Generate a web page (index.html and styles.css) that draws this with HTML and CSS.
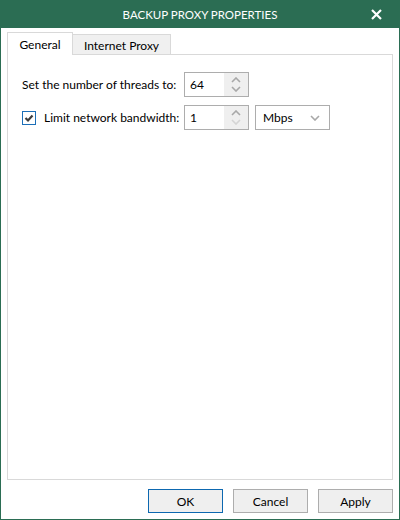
FILE: index.html
```html
<!DOCTYPE html>
<html>
<head>
<meta charset="utf-8">
<link rel="stylesheet" href="styles.css">
</head>
<body>
<div class="window">
  <div class="titlebar">
    <span></span>
    <span class="title">BACKUP PROXY PROPERTIES</span>
    <span class="close">
      <svg width="11" height="11" viewBox="0 0 11 11"><path d="M1 1 L10 10 M10 1 L1 10" stroke="#fff" stroke-width="2.2" fill="none"/></svg>
    </span>
  </div>
  <div class="body">
    <div class="tabs">
      <div class="tab active">General</div>
      <div class="tab inactive">Internet Proxy</div>
    </div>
    <div class="panel">
      <div class="row">
        <span class="label">Set the number of threads to:</span>
        <div class="spin">
          <span class="val">64</span>
          <span class="arrows">
            <svg width="10" height="6" viewBox="0 0 10 6"><path d="M1 5 L5 1 L9 5" stroke="#a8a8a8" stroke-width="1.6" fill="none"/></svg>
            <svg width="10" height="6" viewBox="0 0 10 6"><path d="M1 1 L5 5 L9 1" stroke="#a8a8a8" stroke-width="1.6" fill="none"/></svg>
          </span>
        </div>
      </div>
      <div class="row">
        <span class="check">
          <svg width="12" height="12" viewBox="0 0 12 12"><path d="M2.5 6 L5 8.5 L9.5 3.5" stroke="#3c3c3c" stroke-width="2.2" fill="none"/></svg>
        </span>
        <span class="label label2">Limit network bandwidth:</span>
        <div class="spin">
          <span class="val">1</span>
          <span class="arrows">
            <svg width="10" height="6" viewBox="0 0 10 6"><path d="M1 5 L5 1 L9 5" stroke="#a8a8a8" stroke-width="1.6" fill="none"/></svg>
            <svg width="10" height="6" viewBox="0 0 10 6"><path d="M1 1 L5 5 L9 1" stroke="#d4d4d4" stroke-width="1.6" fill="none"/></svg>
          </span>
        </div>
        <div class="select">
          <span>Mbps</span>
          <svg width="10" height="6" viewBox="0 0 10 6"><path d="M1 1 L5 5 L9 1" stroke="#a8a8a8" stroke-width="1.6" fill="none"/></svg>
        </div>
      </div>
    </div>
    <div class="buttons">
      <button class="btn default">OK</button>
      <button class="btn">Cancel</button>
      <button class="btn">Apply</button>
    </div>
  </div>
</div>
</body>
</html>
```
FILE: styles.css
```css
* { box-sizing: border-box; }
html, body { margin: 0; padding: 0; }
body {
  font-family: "Lato", "Noto Sans", sans-serif;
  font-size: 12px;
  color: #000;
  background: #fff;
}
.window {
  width: 400px;
  height: 520px;
  border: 1px solid #2b6d53;
  border-top: 0;
  display: flex;
  flex-direction: column;
  background: #fff;
}
.titlebar {
  height: 28px;
  margin: 0 -1px;
  background: #2b6d53;
  color: #fff;
  display: grid;
  grid-template-columns: 1fr auto 1fr;
  align-items: center;
}
.title { font-size: 11.5px; white-space: nowrap; }
.close {
  justify-self: end;
  padding-right: 18px;
  display: flex;
  align-items: center;
}
.body {
  flex: 1;
  display: flex;
  flex-direction: column;
  padding: 4px 6px 6px 6px;
}
.tabs {
  display: flex;
  align-items: flex-end;
  height: 22px;
  position: relative;
  z-index: 1;
}
.tab {
  height: 20px;
  padding-top: 1px;
  background: #f0f0f0;
  border: 1px solid #d9d9d9;
  border-bottom: 0;
  display: flex;
  align-items: center;
  justify-content: center;
  white-space: nowrap;
}
.tab.inactive { width: 99px; margin-left: -1px; }
.tab.active {
  width: 66px;
  height: 23px;
  padding-top: 0;
  margin-bottom: -1px;
  background: #fff;
  position: relative;
  z-index: 2;
}
.panel {
  flex: 1;
  border: 1px solid #d9d9d9;
  padding: 17px 14px;
  display: flex;
  flex-direction: column;
  gap: 8px;
}
.row {
  display: flex;
  align-items: center;
  height: 25px;
}
.label { width: 162px; flex-shrink: 0; white-space: nowrap; }
.label2 { width: 140px; }
.check {
  width: 14px;
  height: 14px;
  flex-shrink: 0;
  border: 1px solid #1c6fb8;
  display: flex;
  align-items: center;
  justify-content: center;
  margin-right: 8px;
}
.spin {
  width: 65px;
  height: 25px;
  flex-shrink: 0;
  border: 1px solid #adadad;
  display: flex;
}
.val {
  flex: 1;
  padding-left: 5px;
  display: flex;
  align-items: center;
}
.arrows {
  width: 24px;
  background: #efefef;
  display: flex;
  flex-direction: column;
  align-items: center;
  justify-content: space-around;
  padding: 3px 0;
}
.select {
  width: 75px;
  height: 25px;
  flex-shrink: 0;
  margin-left: 6px;
  border: 1px solid #adadad;
  display: flex;
  align-items: center;
  justify-content: space-between;
  padding: 0 9px 0 7px;
}
.buttons {
  display: flex;
  justify-content: flex-end;
  gap: 10px;
  padding-top: 9px;
}
.btn {
  width: 75px;
  height: 24px;
  font-family: inherit;
  font-size: 12px;
  background: #efefef;
  border: 1px solid #adadad;
  color: #000;
  padding: 0;
}
.btn.default { border-color: #0d68b0; }
```
